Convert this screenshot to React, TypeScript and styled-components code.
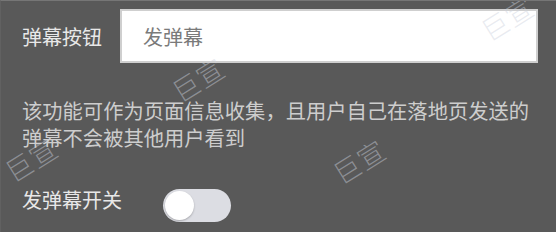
import React from "react";
import styled, { createGlobalStyle } from "styled-components";

const Global = createGlobalStyle`
  html, body { margin: 0; padding: 0; background: #595959; }
  * { box-sizing: border-box; }
`;

const Page = styled.div`
  position: relative;
  width: 556px;
  height: 232px;
  overflow: hidden;
  background: #595959;
  border-top: 1px solid #767676;
  border-left: 1px solid #616161;
  padding: 8px 18px 0 20px;
  font-family: "Noto Sans CJK SC", "Noto Sans", sans-serif;
`;

const Row = styled.div`
  display: flex;
  align-items: center;
`;

const Label = styled.div<{ $width?: number; $lift?: number }>`
  width: ${(p) => (p.$width ? `${p.$width}px` : "auto")};
  flex: none;
  font-size: 20px;
  line-height: 27px;
  color: #e8e8e8;
  padding-left: 1px;
  margin-bottom: ${(p) => p.$lift ?? 0}px;
`;

const Input = styled.div`
  width: 418px;
  height: 54px;
  background: #ffffff;
  border: 2px solid #cfcfcf;
  display: flex;
  align-items: center;
  padding-left: 21px;
  font-size: 20px;
  color: #7a7a7a;
`;

const Description = styled.p`
  margin: 34px 0 0 0;
  padding-left: 1px;
  font-size: 20.3px;
  line-height: 27px;
  color: #cdcdcd;
  width: 516px;
`;

const ToggleRow = styled(Row)`
  margin-top: 35px;
`;

const Track = styled.div<{ $on?: boolean }>`
  width: 68px;
  height: 33px;
  border-radius: 17px;
  background: ${(p) => (p.$on ? "#4a8bf5" : "#dcdde3")};
  display: flex;
  align-items: center;
  padding: 0 2px;
  justify-content: ${(p) => (p.$on ? "flex-end" : "flex-start")};
`;

const Knob = styled.div`
  width: 29px;
  height: 29px;
  border-radius: 50%;
  background: #ffffff;
  box-shadow: 0 1px 2px rgba(0, 0, 0, 0.25);
`;

const Watermark = styled.span`
  position: absolute;
  transform: translate(-50%, -50%) rotate(-32deg);
  font-size: 27px;
  font-weight: 300;
  letter-spacing: 1px;
  color: rgba(205, 210, 222, 0.45);
  white-space: nowrap;
  pointer-events: none;
  line-height: 1;
`;

const marks = [
  { x: 197, y: 78 },
  { x: 506, y: 17 },
  { x: 30, y: 158 },
  { x: 358, y: 160 },
];

export default function App() {
  return (
    <>
      <Global />
      <Page>
        <Row>
          <Label $width={99}>弹幕按钮</Label>
          <Input>发弹幕</Input>
        </Row>
        <Description>
          该功能可作为页面信息收集，且用户自己在落地页发送的弹幕不会被其他用户看到
        </Description>
        <ToggleRow>
          <Label $width={142} $lift={12}>发弹幕开关</Label>
          <Track>
            <Knob />
          </Track>
        </ToggleRow>
        {marks.map((m, i) => (
          <Watermark key={i} style={{ left: m.x, top: m.y }}>
            巨宣
          </Watermark>
        ))}
      </Page>
    </>
  );
}
